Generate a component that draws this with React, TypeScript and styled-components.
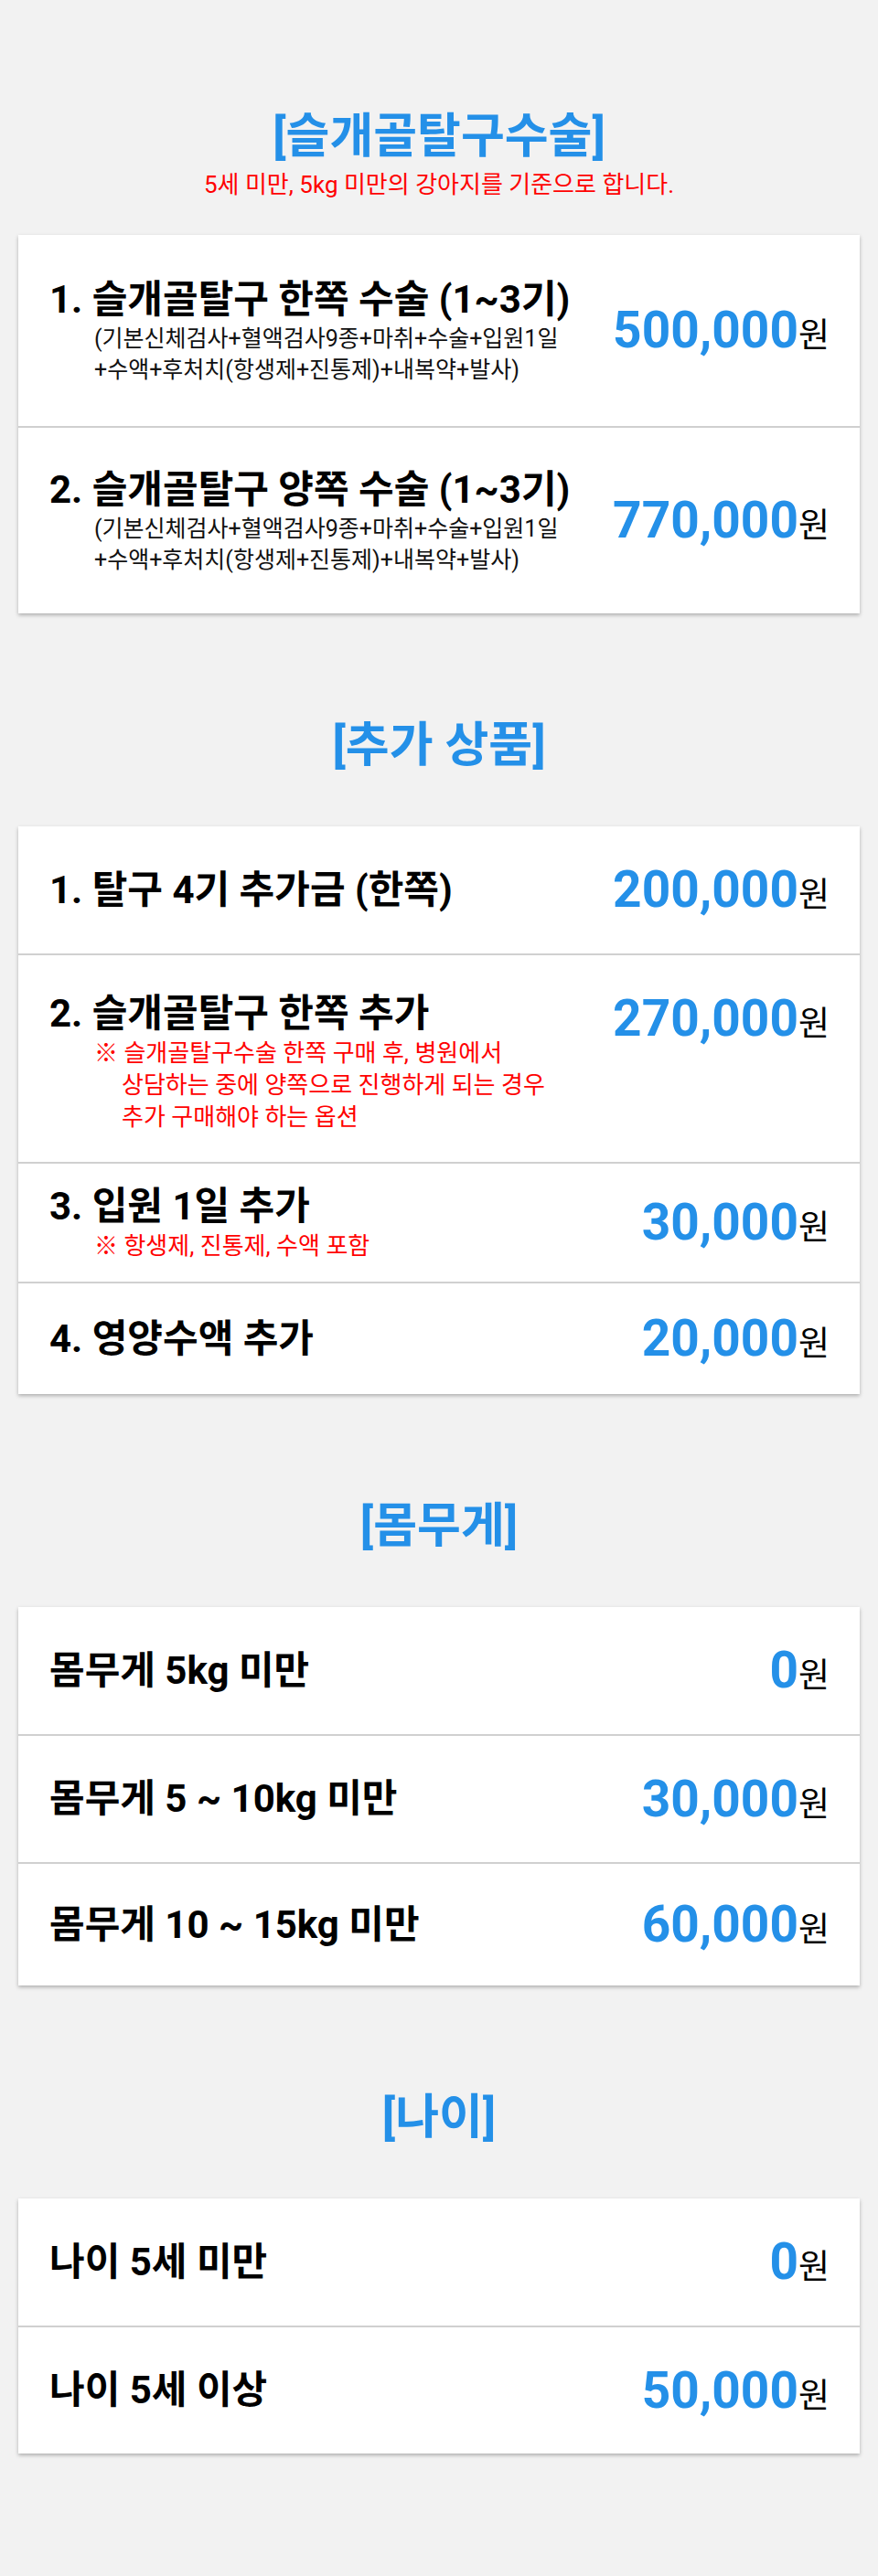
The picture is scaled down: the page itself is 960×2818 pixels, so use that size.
import styled, { createGlobalStyle } from 'styled-components';

const GlobalStyle = createGlobalStyle`
  html, body {
    margin: 0;
    padding: 0;
    background: #f2f2f2;
  }
  body {
    font-family: Roboto, "Noto Sans CJK KR", "Noto Sans", sans-serif;
    color: #111;
  }
`;

const Page = styled.main`
  display: flex;
  flex-direction: column;
  padding: 119px 20px 130px;
  box-sizing: border-box;
  min-height: 2818px;
`;

const Section = styled.section<{ $gap?: number }>`
  display: flex;
  flex-direction: column;
  margin-top: ${(p) => p.$gap ?? 0}px;
`;

const Heading = styled.h2`
  color: #2490e8;
  font-size: 52px;
  font-weight: 700;
  line-height: 62px;
  margin: 0;
  text-align: center;
`;

const Caption = styled.p`
  color: #ff0000;
  font-size: 26px;
  line-height: 30px;
  margin: 6px 0 0;
  text-align: center;
`;

const Card = styled.div<{ $top: number }>`
  background: #fff;
  box-shadow: 0 2px 4px rgba(0, 0, 0, 0.28);
  display: flex;
  flex-direction: column;
  margin-top: ${(p) => p.$top}px;
`;

const Row = styled.div<{ $h: number; $alignTop?: boolean }>`
  align-items: ${(p) => (p.$alignTop ? 'flex-start' : 'center')};
  border-top: 2px solid #d0d0d0;
  box-sizing: border-box;
  display: flex;
  justify-content: space-between;
  min-height: ${(p) => p.$h}px;
  padding: 0 33px 0 34px;

  &:first-child {
    border-top: none;
  }
`;

const Info = styled.div<{ $alignTop?: boolean }>`
  display: flex;
  flex-direction: column;
  padding-top: ${(p) => (p.$alignTop ? '38px' : '0')};
`;

const Name = styled.div`
  font-size: 42px;
  font-weight: 700;
  line-height: 52px;
  color: #000;
`;

const Detail = styled.div`
  font-size: 25px;
  line-height: 34px;
  padding-left: 49px;
  color: #111;
`;

const NoteLine = styled.div<{ $first?: boolean }>`
  color: #ff0000;
  font-size: 26px;
  line-height: 35px;
  padding-left: ${(p) => (p.$first ? '49px' : '79px')};
`;

const Price = styled.div<{ $alignTop?: boolean }>`
  flex-shrink: 0;
  line-height: 1;
  padding-top: ${(p) => (p.$alignTop ? '42px' : '0')};
  white-space: nowrap;
`;

const Amount = styled.span`
  color: #2490e8;
  font-family: Roboto, sans-serif;
  font-size: 55px;
  font-weight: 700;
`;

const Won = styled.span`
  color: #000;
  font-size: 37px;
  font-weight: 400;
`;

type Item = {
  name: string;
  price: string;
  h: number;
  detail?: string[];
  note?: string[];
  alignTop?: boolean;
};

const surgeryDetail = ['(기본신체검사+혈액검사9종+마취+수술+입원1일', '+수액+후처치(항생제+진통제)+내복약+발사)'];

const surgery: Item[] = [
  { name: '1. 슬개골탈구 한쪽 수술 (1~3기)', price: '500,000', h: 209, detail: surgeryDetail },
  { name: '2. 슬개골탈구 양쪽 수술 (1~3기)', price: '770,000', h: 205, detail: surgeryDetail },
];

const extras: Item[] = [
  { name: '1. 탈구 4기 추가금 (한쪽)', price: '200,000', h: 139 },
  {
    name: '2. 슬개골탈구 한쪽 추가',
    price: '270,000',
    h: 228,
    alignTop: true,
    note: ['※ 슬개골탈구수술 한쪽 구매 후, 병원에서', '상담하는 중에 양쪽으로 진행하게 되는 경우', '추가 구매해야 하는 옵션'],
  },
  { name: '3. 입원 1일 추가', price: '30,000', h: 131, note: ['※ 항생제, 진통제, 수액 포함'] },
  { name: '4. 영양수액 추가', price: '20,000', h: 123 },
];

const weight: Item[] = [
  { name: '몸무게 5kg 미만', price: '0', h: 139 },
  { name: '몸무게 5 ~ 10kg 미만', price: '30,000', h: 140 },
  { name: '몸무게 10 ~ 15kg 미만', price: '60,000', h: 135 },
];

const age: Item[] = [
  { name: '나이 5세 미만', price: '0', h: 139 },
  { name: '나이 5세 이상', price: '50,000', h: 140 },
];

function PriceCard({ items, top }: { items: Item[]; top: number }) {
  return (
    <Card $top={top}>
      {items.map((it) => (
        <Row key={it.name} $h={it.h} $alignTop={it.alignTop}>
          <Info $alignTop={it.alignTop}>
            <Name>{it.name}</Name>
            {it.detail?.map((d) => <Detail key={d}>{d}</Detail>)}
            {it.note?.map((n, i) => (
              <NoteLine key={n} $first={i === 0}>
                {n}
              </NoteLine>
            ))}
          </Info>
          <Price $alignTop={it.alignTop}>
            <Amount>{it.price}</Amount>
            <Won>원</Won>
          </Price>
        </Row>
      ))}
    </Card>
  );
}

export default function App() {
  return (
    <>
      <GlobalStyle />
      <Page>
        <Section>
          <Heading>[슬개골탈구수술]</Heading>
          <Caption>5세 미만, 5kg 미만의 강아지를 기준으로 합니다.</Caption>
          <PriceCard items={surgery} top={40} />
        </Section>
        <Section $gap={114}>
          <Heading>[추가 상품]</Heading>
          <PriceCard items={extras} top={57} />
        </Section>
        <Section $gap={114}>
          <Heading>[몸무게]</Heading>
          <PriceCard items={weight} top={57} />
        </Section>
        <Section $gap={114}>
          <Heading>[나이]</Heading>
          <PriceCard items={age} top={57} />
        </Section>
      </Page>
    </>
  );
}
